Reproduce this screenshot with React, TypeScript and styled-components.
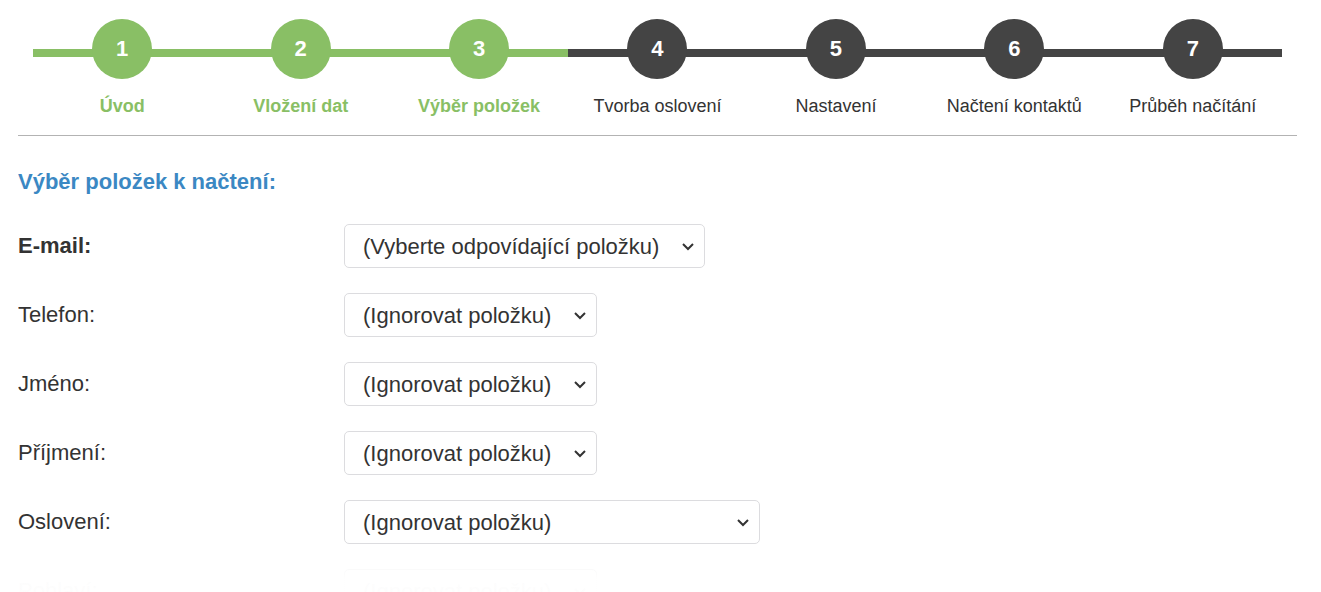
import styled, { createGlobalStyle } from "styled-components";

const GlobalStyle = createGlobalStyle`
  body {
    margin: 0;
    background: #fff;
    font-family: "Liberation Sans", Arial, sans-serif;
    color: #333;
  }
`;

const steps = [
  "Úvod",
  "Vložení dat",
  "Výběr položek",
  "Tvorba oslovení",
  "Nastavení",
  "Načtení kontaktů",
  "Průběh načítání",
];
const activeStep = 3;

const fields = [
  { label: "E-mail:", value: "(Vyberte odpovídající položku)", required: true },
  { label: "Telefon:", value: "(Ignorovat položku)" },
  { label: "Jméno:", value: "(Ignorovat položku)" },
  { label: "Příjmení:", value: "(Ignorovat položku)" },
  { label: "Oslovení:", value: "(Ignorovat položku)", width: 416 },
  { label: "Pohlaví:", value: "(Ignorovat položku)" },
];

const App = () => {
  return (
    <>
      <GlobalStyle />
      <Page>
        <Stepper>
          {steps.map((name, i) => (
            <Step key={name} $done={i < activeStep}>
              <Track>
                <Circle>{i + 1}</Circle>
              </Track>
              <StepLabel>{name}</StepLabel>
            </Step>
          ))}
        </Stepper>
        <Rule />
        <Heading>Výběr položek k načtení:</Heading>
        <Form>
          {fields.map((f) => (
            <Row key={f.label}>
              <Label $bold={f.required}>{f.label}</Label>
              <Select $width={f.width} defaultValue={f.value}>
                <option>{f.value}</option>
              </Select>
            </Row>
          ))}
        </Form>
        <Fade />
      </Page>
    </>
  );
};

export default App;

const GREEN = "#89bf65";
const DARK = "#444";

const Page = styled.div`
  position: relative;
  width: 1279px;
  margin-left: 18px;
  height: 592px;
  overflow: hidden;
`;

const Stepper = styled.div`
  display: grid;
  grid-template-columns: repeat(7, 1fr);
  padding: 19px 15px 0;
`;

const Step = styled.div<{ $done: boolean }>`
  display: flex;
  flex-direction: column;
  align-items: center;
  --step-color: ${(p) => (p.$done ? GREEN : DARK)};

  > div:last-child {
    color: ${(p) => (p.$done ? GREEN : "#333")};
    font-weight: ${(p) => (p.$done ? 700 : 400)};
  }
`;

const Track = styled.div`
  position: relative;
  align-self: stretch;
  display: flex;
  justify-content: center;
  height: 60px;

  &::before {
    content: "";
    position: absolute;
    left: 0;
    right: 0;
    top: 30px;
    height: 8px;
    background: var(--step-color);
  }
`;

const Circle = styled.div`
  position: relative;
  width: 60px;
  height: 60px;
  border-radius: 50%;
  background: var(--step-color);
  color: #fff;
  font-size: 22px;
  font-weight: 700;
  display: flex;
  align-items: center;
  justify-content: center;
`;

const StepLabel = styled.div`
  margin-top: 16px;
  font-size: 18px;
  line-height: 22px;
  white-space: nowrap;
`;

const Rule = styled.hr`
  margin: 18px 0 0;
  border: 0;
  border-top: 1px solid #b3b3b3;
`;

const Heading = styled.h2`
  margin: 31px 0 0;
  font-size: 22px;
  line-height: 30px;
  font-weight: 700;
  color: #3b88c3;
`;

const Form = styled.div`
  display: flex;
  flex-direction: column;
  gap: 25px;
  margin-top: 27px;
`;

const Row = styled.div`
  display: flex;
  align-items: center;
`;

const Label = styled.div<{ $bold?: boolean }>`
  width: 326px;
  font-size: 22px;
  font-weight: ${(p) => (p.$bold ? 700 : 400)};
  color: #333;
`;

const Select = styled.select<{ $width?: number }>`
  appearance: none;
  height: 44px;
  width: ${(p) => (p.$width ? `${p.$width}px` : "auto")};
  padding: 0 44px 0 18px;
  font-family: "Liberation Sans", Arial, sans-serif;
  font-size: 22px;
  color: #333;
  background: #fff
    url("data:image/svg+xml,%3Csvg xmlns='http://www.w3.org/2000/svg' width='14' height='10' viewBox='0 0 14 10'%3E%3Cpath d='M2 3l5 5 5-5' fill='none' stroke='%23333' stroke-width='2'/%3E%3C/svg%3E")
    no-repeat right 9px center;
  border: 1px solid #dcdcdf;
  border-radius: 5px;
`;

// white fade over the bottom edge of the scrolled form
const Fade = styled.div`
  position: absolute;
  left: 0;
  right: 0;
  bottom: 0;
  height: 46px;
  background: linear-gradient(
    rgba(255, 255, 255, 0),
    rgba(255, 255, 255, 0.85) 50%,
    rgba(255, 255, 255, 0.99) 72%
  );
  pointer-events: none;
`;
